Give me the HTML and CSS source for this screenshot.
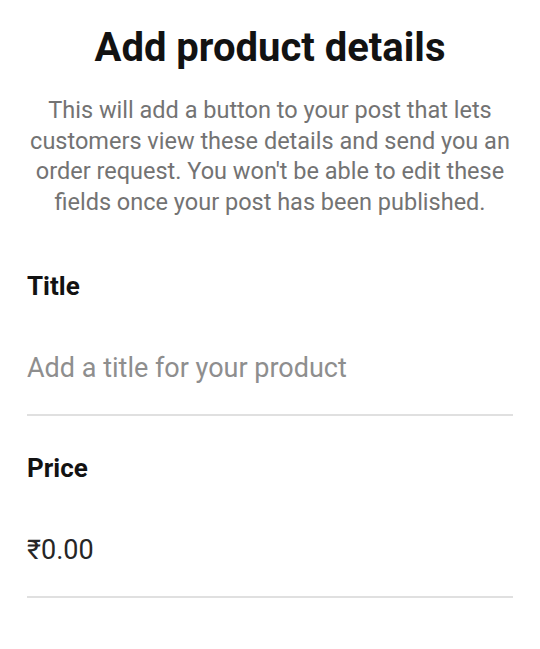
FILE: index.html
```html
<!DOCTYPE html>
<html lang="en">
  <head>
    <meta charset="UTF-8" />
    <meta name="viewport" content="width=device-width, initial-scale=1.0" />
    <title>Add product details</title>
    <link rel="stylesheet" href="styles.css">
  </head>
  <body>
    <div class="page">
      <h1>Add product details</h1>
      <p class="intro">
        This will add a button to your post that lets customers view these
        details and send you an order request. You won't be able to edit these
        fields once your post has been published.
      </p>

      <div class="field">
        <label for="productTitle">Title</label>
        <input id="productTitle" type="text" placeholder="Add a title for your product" />
      </div>

      <div class="field">
        <label for="productPrice">Price</label>
        <input id="productPrice" type="text" value="₹0.00" />
      </div>
    </div>
  </body>
</html>
```

FILE: styles.css
```css
body {
  margin: 0;
  padding: 0;
  background-color: #fff;
  font-family: Roboto, "Noto Sans", Arial, sans-serif;
  color: #262626;
}
.page {
  padding: 0 27px;
}
h1 {
  margin: 25px 0 0;
  font-size: 40px;
  line-height: 46px;
  font-weight: 700;
  text-align: center;
  color: #121212;
}
.intro {
  margin: 24px 0 0;
  font-size: 23.5px;
  line-height: 30.5px;
  text-align: center;
  color: #737373;
}
.field {
  margin-top: 37px;
}
.intro + .field {
  margin-top: 54px;
}
.field label {
  display: block;
  font-size: 26px;
  line-height: 30px;
  font-weight: 700;
  color: #121212;
}
.field input {
  display: block;
  width: 100%;
  box-sizing: border-box;
  margin: 0;
  padding: 51px 0 30px;
  border: none;
  border-bottom: 2px solid #e0e0e0;
  outline: none;
  background: transparent;
  font-family: inherit;
  font-size: 27px;
  line-height: 32px;
  color: #262626;
}
.field input::placeholder {
  color: #8e8e8e;
}
```
